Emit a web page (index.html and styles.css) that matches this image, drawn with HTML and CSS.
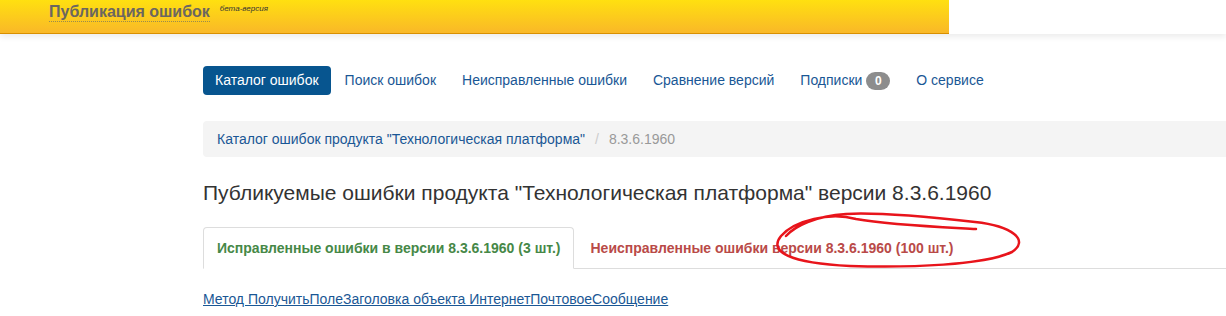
FILE: index.html
```html
<!DOCTYPE html>
<html lang="ru">
  <head>
    <meta charset="UTF-8" />
    <meta name="viewport" content="width=device-width, initial-scale=1.0" />
    <title>Публикация ошибок</title>
    <link rel="stylesheet" href="styles.css">
  </head>
  <body>
    <!-- Шапка -->
    <div class="topbar">
      <div class="brand">
        <a href="#" class="brand-title">Публикация ошибок</a>
        <span class="beta">бета-версия</span>
      </div>
    </div>

    <div class="container">
      <!-- Меню -->
      <ul class="pills">
        <li><a href="#" class="active">Каталог ошибок</a></li>
        <li><a href="#">Поиск ошибок</a></li>
        <li><a href="#">Неисправленные ошибки</a></li>
        <li><a href="#">Сравнение версий</a></li>
        <li><a href="#">Подписки <span class="badge">0</span></a></li>
        <li><a href="#">О сервисе</a></li>
      </ul>

      <ol class="breadcrumb">
        <li><a href="#">Каталог ошибок продукта "Технологическая платформа"</a></li>
        <li class="current">8.3.6.1960</li>
      </ol>

      <h3 class="page-title">Публикуемые ошибки продукта "Технологическая платформа" версии 8.3.6.1960</h3>

      <!-- Вкладки -->
      <ul class="tabs">
        <li class="active"><a href="#" class="text-success">Исправленные ошибки в версии 8.3.6.1960 (3 шт.)</a></li>
        <li><a href="#" class="text-error">Неисправленные ошибки версии 8.3.6.1960 (100 шт.)</a></li>
      </ul>

      <div class="tab-content">
        <a href="#">Метод ПолучитьПолеЗаголовка объекта ИнтернетПочтовоеСообщение</a>
      </div>
    </div>

    <!-- Пометка от руки поверх страницы -->
    <svg class="scribble" width="1226" height="316" viewBox="0 0 1226 316">
      <path d="M 976 229 C 940 227, 890 225, 856 219
               C 830 212, 795 220, 781 236
               C 768 252, 790 263, 850 266
               C 910 268, 985 265, 1012 252
               C 1030 240, 1012 226, 975 222
               C 930 217, 880 212, 846 214
               C 815 216, 795 226, 786 236"
            fill="none" stroke="#e8141b" stroke-width="2.5" stroke-linecap="round" />
    </svg>
  </body>
</html>
```

FILE: styles.css
```css
body {
  margin: 0;
  font-family: "Liberation Sans", Arial, sans-serif;
  font-size: 14px;
  line-height: 20px;
  color: #333;
  background: #fff;
  overflow: hidden;
  position: relative;
}

a {
  color: #1a5795;
  text-decoration: none;
}

/* Шапка */
.topbar {
  background: #fff;
  box-shadow: 0 3px 6px rgba(0, 0, 0, 0.08);
}

.brand {
  width: 900px;
  height: 33px;
  padding-left: 49px;
  background: linear-gradient(to bottom, #ffe010, #f9b828);
  border-bottom: 1px solid #d88f00;
  box-sizing: content-box;
}

.brand-title {
  display: inline-block;
  margin-top: 3px;
  font-size: 16px;
  font-weight: bold;
  line-height: 18px;
  color: #6b6660;
  border-bottom: 1px dotted #9a8a50;
}

.beta {
  display: inline-block;
  vertical-align: top;
  margin: 4px 0 0 6px;
  font-size: 8px;
  line-height: 10px;
  font-style: italic;
  color: #333;
}

/* Контент */
.container {
  width: 1170px;
  margin-left: 203px;
  padding-top: 32px;
}

.pills {
  display: flex;
  list-style-type: none;
  margin: 0 0 26px;
  padding: 0;
}

.pills li {
  margin-right: 2px;
}

.pills a {
  display: block;
  padding: 5px 12px;
  line-height: 19px;
  border-radius: 4px;
}

.pills a.active {
  background-color: #07558f;
  color: #fff;
}

.badge {
  display: inline-block;
  min-width: 10px;
  padding: 1px 7px;
  font-size: 12px;
  font-weight: bold;
  line-height: 16px;
  color: #fff;
  text-align: center;
  background-color: #8d8d8d;
  border-radius: 9px;
}

.breadcrumb {
  display: flex;
  list-style-type: none;
  margin: 0 0 25px;
  padding: 8px 14px;
  background-color: #f4f4f4;
  border-radius: 4px;
}

.breadcrumb li + li:before {
  content: "/";
  padding: 0 10px;
  color: #ccc;
}

.breadcrumb .current {
  color: #999;
}

.page-title {
  margin: 0 0 23px;
  font-size: 21px;
  font-weight: normal;
  line-height: 22px;
  color: #333;
}

/* Вкладки */
.tabs {
  display: flex;
  list-style-type: none;
  margin: 0;
  padding: 0;
  border-bottom: 1px solid #ddd;
}

.tabs li {
  margin-bottom: -1px;
  margin-right: 2px;
}

.tabs a {
  display: block;
  padding: 10px 13px;
  font-size: 14px;
  font-weight: bold;
  line-height: 20px;
  border: 1px solid transparent;
  border-radius: 4px 4px 0 0;
}

.tabs li.active a {
  background-color: #fff;
  border-color: #ddd #ddd transparent;
}

.text-success {
  color: #468847;
}

.text-error {
  color: #b94a48;
}

.tab-content {
  padding-top: 20px;
}

.tab-content a {
  text-decoration: underline;
}

/* Пометка */
.scribble {
  position: absolute;
  top: 0;
  left: 0;
  pointer-events: none;
}
```
